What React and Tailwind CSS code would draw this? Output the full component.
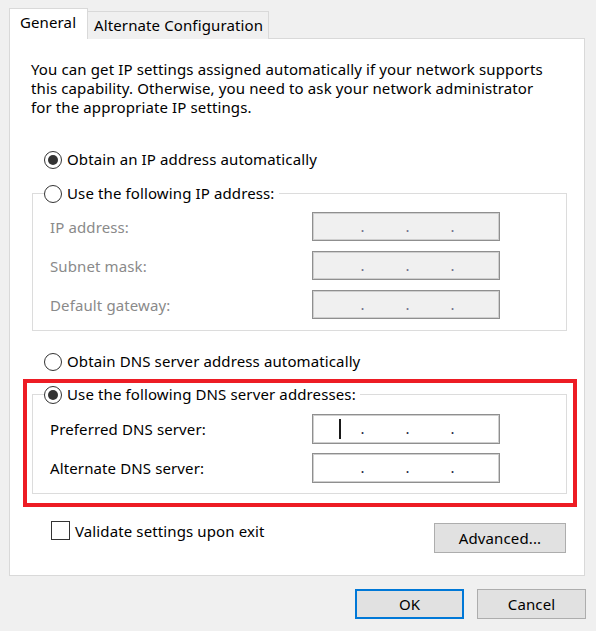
import React from "react";

const Radio = ({ checked }) => (
  <span className="mt-[2px] flex h-[18px] w-[18px] shrink-0 items-center justify-center rounded-full border border-[#333333] bg-white">
    {checked && <span className="h-[10px] w-[10px] rounded-full bg-[#333333]" />}
  </span>
);

const IpBox = ({ disabled, caret }) => (
  <div
    className={`relative flex h-full w-[188px] items-start border border-[#8f8f8f] pl-[27px] pt-[3px] shadow-[inset_0_0_0_1px_#cfcfcf] ${
      disabled ? "bg-[#f0f0f0] text-[#6d6d8a]" : "bg-white text-[#1c1c3c]"
    }`}
  >
    {caret && <span className="absolute left-[26px] top-[4px] h-[20px] w-[2px] bg-[#1a1a1a]" />}
    <span className="w-[45px] text-center leading-[20px]">.</span>
    <span className="w-[45px] text-center leading-[20px]">.</span>
    <span className="w-[45px] text-center leading-[20px]">.</span>
  </div>
);

const FieldRow = ({ label, disabled, caret, h }) => (
  <div className={`flex items-center pl-[17px] ${h}`}>
    <span className={`w-[262px] leading-[20px] ${disabled ? "text-[#8a8a8a]" : "text-black"}`}>{label}</span>
    <IpBox disabled={disabled} caret={caret} />
  </div>
);

const Button = ({ children, primary, className = "" }) => (
  <button
    className={`flex items-center justify-center bg-[#e1e1e1] leading-[20px] text-black ${
      primary ? "border-2 border-[#0078d7]" : "border border-[#adadad]"
    } ${className}`}
  >
    {children}
  </button>
);

export default function App() {
  return (
    <div className="relative h-[631px] w-[596px] overflow-hidden bg-[#f0f0f0] font-['Noto_Sans',sans-serif] text-[15px] tracking-[0.12px] text-black">
      {/* Tabs */}
      <div className="flex h-[39px] items-end pl-[9px] pt-[8px]">
        <div className="relative z-10 h-[31px] w-[79px] border-x border-t border-[#d9d9d9] bg-white pl-[10px] pt-[3px] leading-[20px]">
          General
        </div>
        <div className="h-[28px] w-[181px] border-r border-t border-[#d9d9d9] bg-[#f0f0f0] pl-[6px] pt-[3px] leading-[20px]">
          Alternate Configuration
        </div>
      </div>

      {/* Panel */}
      <div className="-mt-px ml-[9px] h-[538px] w-[576px] border border-[#d9d9d9] bg-white">
        <p className="mt-[21px] pl-[21px] leading-[19px]">
          You can get IP settings assigned automatically if your network supports
          <br />
          this capability. Otherwise, you need to ask your network administrator
          <br />
          for the appropriate IP settings.
        </p>

        <div className="ml-[34px] mt-[32px] flex h-[20px] items-start gap-[5px] leading-[20px]">
          <Radio checked />
          <span>Obtain an IP address automatically</span>
        </div>

        <fieldset className="ml-[22px] mt-[14px] w-[535px] border border-[#dcdcdc] px-0 pb-[11px] pt-[9px]">
          <legend className="ml-[11px] flex items-start gap-[5px] pr-[4px] leading-[20px]">
            <Radio />
            <span>Use the following IP address:</span>
          </legend>
          <div className="flex flex-col gap-[10px]">
            <FieldRow label="IP address:" disabled h="h-[29px]" />
            <FieldRow label="Subnet mask:" disabled h="h-[29px]" />
            <FieldRow label="Default gateway:" disabled h="h-[29px]" />
          </div>
        </fieldset>

        <div className="ml-[34px] mt-[20px] flex h-[20px] items-start gap-[5px] leading-[20px]">
          <Radio />
          <span>Obtain DNS server address automatically</span>
        </div>

        <fieldset className="ml-[22px] mt-[13px] w-[535px] border border-[#dcdcdc] px-0 pb-[10px] pt-[10px]">
          <legend className="ml-[11px] flex items-start gap-[5px] pr-[4px] leading-[20px]">
            <Radio checked />
            <span>Use the following DNS server addresses:</span>
          </legend>
          <div className="flex flex-col gap-[9px]">
            <FieldRow label="Preferred DNS server:" caret h="h-[30px]" />
            <FieldRow label="Alternate DNS server:" h="h-[30px]" />
          </div>
        </fieldset>

        <div className="mt-[27px] flex items-start">
          <div className="ml-[41px] flex items-start gap-[5px] leading-[20px]">
            <span className="h-[19px] w-[19px] border border-[#333333] bg-white" />
            <span>Validate settings upon exit</span>
          </div>
          <Button className="ml-auto mr-[18px] mt-[2px] h-[30px] w-[132px]">Advanced...</Button>
        </div>
      </div>

      {/* Dialog buttons */}
      <div className="mt-[13px] flex justify-end gap-[13px] pr-[10px]">
        <Button primary className="h-[30px] w-[109px]">
          OK
        </Button>
        <Button className="h-[30px] w-[109px]">Cancel</Button>
      </div>

      {/* Annotation */}
      <div className="pointer-events-none absolute left-[23px] top-[379px] h-[128px] w-[554px] border-4 border-[#ed1c24]" />
    </div>
  );
}
